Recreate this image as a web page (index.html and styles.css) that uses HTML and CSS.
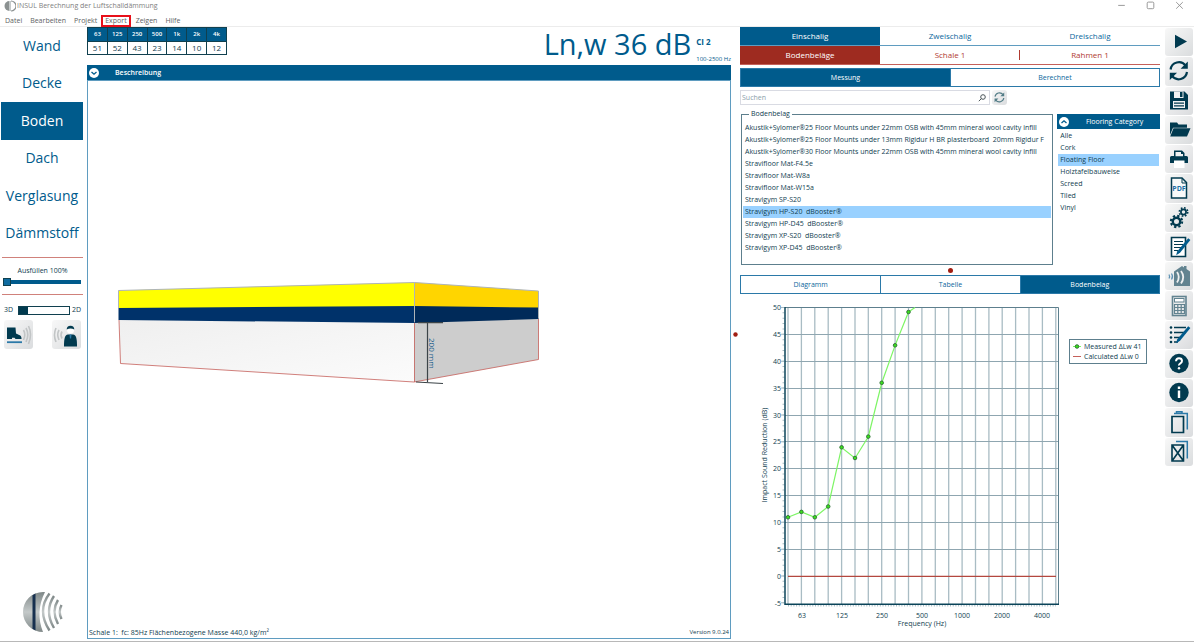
FILE: index.html
```html
<!DOCTYPE html>
<html lang="de">
<head>
<meta charset="utf-8">
<title>INSUL Berechnung der Luftschalldämmung</title>
<link rel="stylesheet" href="styles.css">
</head>
<body>
<svg class="defs" aria-hidden="true">
  <defs>
    <linearGradient id="ball" x1="0" y1="0" x2="0" y2="1"><stop offset="0" stop-color="#7f8888"/><stop offset=".5" stop-color="#c4c9c9"/><stop offset="1" stop-color="#7f8888"/></linearGradient>
    <linearGradient id="front" x1="0" y1="0" x2="1" y2="1"><stop offset="0" stop-color="#efefef"/><stop offset="1" stop-color="#fbfbfb"/></linearGradient>
    <symbol id="refresh" viewBox="0 0 28 28">
      <g fill="none" stroke="currentColor" stroke-width="2.2"><path d="M5.600 12.500A8.400 8.400 0 0 1 20.600 8.600"/><path d="M22 15A8.400 8.400 0 0 1 7 18.900"/></g>
      <path fill="currentColor" d="M22.800 4.600v7.200h-7.200zM4.800 22.900v-7.200H12z"/>
    </symbol>
    <symbol id="pen" viewBox="0 0 28 28"><path fill="#005b8c" d="M23.200 5.200l2.200 1.700L15 19.800l-3.800 2.400.9-3.800z"/></symbol>
  </defs>
</svg>
<header class="titlebar">
  <svg class="app-icon" viewBox="0 0 12 12"><path d="M5.500 1a5 5 0 0 0 0 10z" fill="#8b9191"/><path d="M5.500 1h1.500v10H5.500z" fill="#c4c9c9"/><path d="M7 1a5 5 0 0 1 0 10" fill="none" stroke="#8b9191" stroke-width="1.200"/></svg>
  <h1>INSUL Berechnung der Luftschalldämmung</h1>
  <div class="window-controls">
    <button aria-label="Minimieren"><svg viewBox="0 0 10 10"><path d="M2 4h6"/></svg></button>
    <button aria-label="Maximieren"><svg viewBox="0 0 10 10"><rect x="2" y="1" width="6" height="6" rx="1"/></svg></button>
    <button aria-label="Schließen"><svg viewBox="0 0 10 10"><path d="M2 1l6 6M8 1L2 7"/></svg></button>
  </div>
</header>
<nav class="menubar">
  <button>Datei</button><button>Bearbeiten</button><button>Projekt</button><button class="marked">Export</button><button>Zeigen</button><button>Hilfe</button>
</nav>
<main class="workspace">
  <aside class="sidebar">
    <div class="elements">
      <button>Wand</button><button>Decke</button><button class="active">Boden</button><button>Dach</button><button>Verglasung</button><button>Dämmstoff</button>
    </div>
    <div class="fill">
      <label for="fill">Ausfüllen 100%</label>
      <input id="fill" type="range" min="0" max="100" value="0">
    </div>
    <div class="dimension">
      <label for="dim">3D</label>
      <input id="dim" type="range" min="0" max="1" value="0">
      <span>2D</span>
    </div>
    <div class="modes">
      <button aria-label="Trittschall"><svg viewBox="0 0 28 28">
        <path fill="#013a4f" d="M3 6.500h8.500l.5 6c3 1.600 5.500 1.600 5.500 4.800v.7h-6l-1-1.200H8V18H3z"/><path stroke="#2b79a8" stroke-width="1.800" d="M3 21.200h15"/>
        <g fill="none" stroke="#c2c5c6" stroke-width="1.600"><path d="M19.500 9q2.500 4.500 0 10"/><path d="M22 7q3.500 6.500 0 14"/><path d="M24.500 5q4 8 0 18"/></g></svg></button>
      <button aria-label="Luftschall"><svg viewBox="0 0 28 28">
        <path fill="#013a4f" d="M12 25.500c0-7 .5-12 4-12h5c3.500 0 4 5 4 12z"/><circle cx="18.500" cy="9" r="3.600" fill="#fff"/><path fill="#013a4f" d="M14.700 8.500a3.800 3.800 0 0 1 7.600 0q-3.800-2-7.600 0z"/><path fill="#2b79a8" d="M17.500 13.500h2l-.4 4h-1.200z"/>
        <g fill="none" stroke="#c2c5c6" stroke-width="1.600"><path d="M4 7q-3 6.500 0 14"/><path d="M7 9q-2.500 4.500 0 10"/><path d="M10 10.500q-2 3.500 0 7"/></g></svg></button>
    </div>
    <svg class="logo" viewBox="0 0 40 40">
      <path d="M20 0a20 20 0 0 0 0 40q-8-20 2-40z" fill="url(#ball)"/><path d="M9.500 3.200l3-1.600v36.800l-3-1.600z" fill="#17304f"/>
      <g fill="none" stroke="url(#ball)" stroke-width="2.400"><path d="M26.500 1.500q-13 17 0 37"/><path d="M31 4q-10 15 0 32"/><path d="M35 8q-7 11 0 24"/><path d="M38.500 13q-3.500 7 0 14"/></g>
    </svg>
  </aside>

  <section class="model">
    <div class="summary">
      <table class="bands">
        <thead><tr><th>63</th><th>125</th><th>250</th><th>500</th><th>1k</th><th>2k</th><th>4k</th></tr></thead>
        <tbody><tr><td>51</td><td>52</td><td>43</td><td>23</td><td>14</td><td>10</td><td>12</td></tr></tbody>
      </table>
      <div class="rating"><strong>Ln,w 36 dB</strong><div class="spectrum"><b>CI 2</b><span>100-2500 Hz</span></div></div>
    </div>
    <div class="description-bar">
      <button class="round" aria-label="Beschreibung öffnen"><svg viewBox="0 0 10 10"><path d="M2.500 4L5 6.200 7.500 4"/></svg></button>
      <h2>Beschreibung</h2>
    </div>
    <div class="canvas">
      <svg class="scene" viewBox="88 81 642 546" role="img" aria-label="Bodenaufbau">
        <path fill="url(#front)" d="M119 319.500L414 322.500V382L120.500 363.500z"/>
        <path fill="#cdcdcd" d="M414 322.500L538.500 318V359.500L414 382z"/>
        <path fill="#00326a" d="M118.500 307L414.500 305V323L118.500 320z"/>
        <path fill="#002a59" d="M414.500 305L538.500 306V319L414.500 323z"/>
        <path fill="#ff0" d="M118.500 290.500L414.500 282.500V306L118.500 308z"/>
        <path fill="#ffd500" d="M414.500 282.500L538.500 291V307.500L414.500 306z"/>
        <path fill="none" stroke="#aeb4b8" d="M118.500 308V290.500L414.500 282.500 538.500 291V318M414.500 282.500V322"/>
        <path fill="none" stroke="#c5605a" stroke-width=".8" d="M119 320L120.500 363.500 414 382 538.500 359.500V319M414.500 323V382"/>
        <path fill="none" stroke="#3c4448" stroke-width="1.200" d="M418 322.700H443M427.500 323V382M416 382L443 383.500"/>
        <text class="measure" transform="translate(429 338) rotate(90)">200 mm</text>
      </svg>
      <footer><span>Schale 1:&nbsp; fc: 85Hz Flächenbezogene Masse 440,0 kg/m²</span><small>Version 9.0.24</small></footer>
    </div>
  </section>

  <section class="panel">
    <div class="tabs leaves"><button class="active">Einschalig</button><button>Zweischalig</button><button>Dreischalig</button></div>
    <div class="tabs parts"><button class="active">Bodenbeläge</button><button class="split">Schale 1</button><button>Rahmen 1</button></div>
    <div class="tabs boxed source"><button class="active">Messung</button><button>Berechnet</button></div>
    <div class="search">
      <div class="search-box"><input type="text" placeholder="Suchen" aria-label="Suchen"><svg viewBox="0 0 10 10"><circle cx="6" cy="4" r="2.300"/><path d="M4.300 5.700L1.800 8.200"/></svg></div>
      <button class="reload" aria-label="Aktualisieren"><svg><use href="#refresh"/></svg></button>
    </div>
    <div class="lists">
      <fieldset class="coverings">
        <legend>Bodenbelag</legend>
        <ul>
          <li>Akustik+Sylomer®25 Floor Mounts under 22mm OSB with 45mm mineral wool cavity infill</li>
          <li>Akustik+Sylomer®25 Floor Mounts under 13mm Rigidur H BR plasterboard&nbsp; 20mm Rigidur F</li>
          <li>Akustik+Sylomer®30 Floor Mounts under 22mm OSB with 45mm mineral wool cavity infill</li>
          <li>Stravifloor Mat-F4.5e</li>
          <li>Stravifloor Mat-W8a</li>
          <li>Stravifloor Mat-W15a</li>
          <li>Stravigym SP-S20</li>
          <li class="selected">Stravigym HP-S20&nbsp; dBooster®</li>
          <li>Stravigym HP-D45&nbsp; dBooster®</li>
          <li>Stravigym XP-S20&nbsp; dBooster®</li>
          <li>Stravigym XP-D45&nbsp; dBooster®</li>
        </ul>
      </fieldset>
      <div class="categories">
        <div class="category-head"><button class="round" aria-label="Einklappen"><svg viewBox="0 0 10 10"><path d="M2.500 6L5 3.800 7.500 6"/></svg></button><h2>Flooring Category</h2></div>
        <ul>
          <li>Alle</li><li>Cork</li><li class="selected">Floating Floor</li><li>Holztafelbauweise</li><li>Screed</li><li>Tiled</li><li>Vinyl</li>
        </ul>
      </div>
    </div>
    <div class="grip"></div>
    <div class="tabs boxed views"><button>Diagramm</button><button>Tabelle</button><button class="active">Bodenbelag</button></div>
    <svg class="chart" viewBox="740 294 420 343" preserveAspectRatio="xMidYMin meet" role="img" aria-label="Impact Sound Reduction">
      <circle cx="735.500" cy="334.500" r="2.200" fill="#a11e12"/>
      <path stroke="#a9bcc4" stroke-width="1.300" d="M788 307.500V604M801.400 307.500V604M814.800 307.500V604M828.200 307.500V604M841.600 307.500V604M855 307.500V604M868.300 307.500V604M881.700 307.500V604M895.100 307.500V604M908.500 307.500V604M921.900 307.500V604M935.300 307.500V604M948.700 307.500V604M962.100 307.500V604M975.500 307.500V604M988.900 307.500V604M1002.200 307.500V604M1015.600 307.500V604M1029 307.500V604M1042.400 307.500V604M1055.800 307.500V604"/>
      <path stroke="#8fa6b0" stroke-width="1" d="M785 334.500H1059M785 361.500H1059M785 388.500H1059M785 415.500H1059M785 441.500H1059M785 468.500H1059M785 495.500H1059M785 522.500H1059M785 549.500H1059"/>
      <path stroke="#a9bcc4" stroke-width="2" stroke-dasharray="1 4.370" d="M783.500 307V604"/>
      <path stroke="#a9bcc4" stroke-width="3" stroke-dasharray="1 25.850" d="M782.500 307V604"/>
      <path stroke="#a9bcc4" stroke-width="2" stroke-dasharray="1 1.700" d="M788 605.500H1056"/>
      <path fill="none" stroke="#5d7f8d" d="M785 307.500H1058.500V604"/>
      <path fill="none" stroke="#0b4459" stroke-width="1.500" d="M785 307V604.300H1059"/>
      <path stroke="#b4473f" stroke-width="1.200" d="M788 576.400H1056"/>
      <path fill="none" stroke="#7df565" stroke-width="1.200" d="M788 517.300L801.400 511.900 814.800 517.300 828.200 506.500 841.600 447.500 855 458.200 868.300 436.700 881.700 383 895.100 345.400 908.500 312 915 307.500"/>
      <g class="points"><circle cx="788" cy="517.300" r="1.800"/><circle cx="801.400" cy="511.900" r="1.800"/><circle cx="814.800" cy="517.300" r="1.800"/><circle cx="828.200" cy="506.500" r="1.800"/><circle cx="841.600" cy="447.300" r="1.800"/><circle cx="855" cy="458" r="1.800"/><circle cx="868.300" cy="436.600" r="1.800"/><circle cx="881.700" cy="382.800" r="1.800"/><circle cx="895.100" cy="345.300" r="1.800"/><circle cx="908.500" cy="312" r="1.800"/></g>
      <g class="scale-y"><text x="781" y="310">50</text><text x="781" y="337">45</text><text x="781" y="364">40</text><text x="781" y="391">35</text><text x="781" y="418">30</text><text x="781" y="444">25</text><text x="781" y="471">20</text><text x="781" y="498">15</text><text x="781" y="525">10</text><text x="781" y="552">5</text><text x="781" y="579">0</text><text x="781" y="606">-5</text></g>
      <g class="scale-x"><text x="802" y="618">63</text><text x="842" y="618">125</text><text x="882" y="618">250</text><text x="922" y="618">500</text><text x="962" y="618">1000</text><text x="1002" y="618">2000</text><text x="1042" y="618">4000</text><text x="922" y="626">Frequency (Hz)</text><text transform="translate(767 455) rotate(-90)">Impact Sound Reduction (dB)</text></g>
      <rect x="1069.500" y="339.500" width="77" height="24" fill="#fff" stroke="#5d7f8d"/>
      <path stroke="#7df565" d="M1073 346.500H1081"/><g class="points"><circle cx="1077" cy="346.500" r="1.800"/></g><path stroke="#c5605a" d="M1073 356.500H1081"/>
      <text x="1084" y="349">Measured ΔLw 41</text><text x="1084" y="359">Calculated ΔLw 0</text>
    </svg>
  </section>

  <aside class="toolbar">
    <button aria-label="Berechnen"><svg viewBox="0 0 28 28"><path fill="#013a4f" d="M10 6.700L22 13.500 10 20.200z"/></svg></button>
    <button aria-label="Aktualisieren"><svg viewBox="0 0 28 28"><use href="#refresh"/></svg></button>
    <button aria-label="Speichern"><svg viewBox="0 0 28 28"><path fill="#013a4f" d="M5 4.500h14.500L23 8v14.500H5z"/><path fill="#f1f2f3" d="M9 4.500h9.500v6.500H9zM8 14h12v7H8z"/><path fill="#013a4f" d="M15 5h2.500v5H15zM9 15.500h10v1.300H9zM9 18.200h10v1.300H9z"/></svg></button>
    <button aria-label="Öffnen"><svg viewBox="0 0 28 28"><path fill="#013a4f" d="M5 6.500h7l1.500 2H22v3.200H8L5 19z"/><path fill="#013a4f" d="M8.500 12.300H25.500L22 20.500H5.200z"/></svg></button>
    <button aria-label="Drucken"><svg viewBox="0 0 28 28"><path fill="#013a4f" d="M9 5.500h8l2.500 2.500v3.500H9zM6.500 11h15a1.500 1.500 0 0 1 1.500 1.500V18H5v-5.500A1.500 1.500 0 0 1 6.500 11z"/><path fill="#fff" d="M9 15.500h10.500V23H9z"/><path fill="#f1f2f3" d="M10.500 7h5.500v2h2v2.200h-7.500z"/></svg></button>
    <button aria-label="PDF"><svg viewBox="0 0 28 28"><path fill="#f8f9f9" stroke="#013a4f" stroke-width="1.500" d="M6.500 4h10.500l4.500 4.500v15.500H6.500z"/><path fill="none" stroke="#013a4f" d="M17 4.500V9h4.500"/><text class="pdf" x="14" y="17">PDF</text></svg></button>
    <button aria-label="Einstellungen"><svg viewBox="0 0 28 28" fill="none" stroke="#013a4f"><circle cx="11.500" cy="17.500" r="3.700" stroke-width="2.400"/><circle cx="11.500" cy="17.500" r="5.700" stroke-width="2" stroke-dasharray="2.300 2.180"/><circle cx="18.500" cy="8" r="2.600" stroke-width="1.700"/><circle cx="18.500" cy="8" r="4.200" stroke-width="1.600" stroke-dasharray="1.700 1.600"/></svg></button>
    <button aria-label="Bericht bearbeiten"><svg viewBox="0 0 28 28"><path fill="#fff" stroke="#013a4f" stroke-width="1.600" d="M6.500 4.500h14v19h-14z"/><path stroke="#013a4f" d="M9 8.500h9M9 11.500h9M9 14.500h7M9 17.500h4"/><use href="#pen"/></svg></button>
    <button aria-label="Gebäude"><svg viewBox="0 0 28 28"><path fill="#628390" d="M9 9.500L17 4l2 1.500V4h2.500v3L25 9.500V24H9z"/><g fill="none" stroke="#eef0f1" stroke-width="1.800"><path d="M12 10q3.500 5 0 10.500"/><path d="M16 9q4.500 6 0 12.500"/></g><g fill="none" stroke="#5d91b3" stroke-width="1.200"><path d="M6.500 11.500q2 3 0 6"/><path d="M4 12.500q1.200 2 0 4"/></g></svg></button>
    <button aria-label="Rechner"><svg viewBox="0 0 28 28" fill="none" stroke="#628390"><rect x="7.500" y="4.500" width="13.500" height="19" stroke-width="1.600"/><rect x="9.500" y="6.500" width="9.500" height="3.500" fill="#fff"/><path d="M9.500 12.500H19.500M9.500 15.500H19.500M9.500 18.500H19.500M9.500 21.500H19.500M9.500 12V22M12.800 12V22M16.200 12V22M19.500 12V22" stroke-width="1.200"/></svg></button>
    <button aria-label="Liste bearbeiten"><svg viewBox="0 0 28 28"><path stroke="#013a4f" stroke-width="1.600" d="M9 6.500h12M9 11.500h12M9 16.500h7M9 21h4"/><g fill="#013a4f"><circle cx="6" cy="6.500" r="1.300"/><circle cx="6" cy="11.500" r="1.300"/><circle cx="6" cy="16.500" r="1.300"/><circle cx="6" cy="21" r="1.300"/></g><use href="#pen"/></svg></button>
    <button aria-label="Hilfe"><svg viewBox="0 0 28 28"><circle cx="14" cy="13.500" r="9.700" fill="#013a4f"/><path fill="none" stroke="#fff" stroke-width="2" d="M11 11.300q.2-3 3-3t3 2.500q0 1.600-1.600 2.500T14 15.500"/><circle cx="14" cy="18.300" r="1.200" fill="#fff"/></svg></button>
    <button aria-label="Info"><svg viewBox="0 0 28 28"><circle cx="14" cy="13.500" r="9.700" fill="#013a4f"/><path fill="#fff" d="M12.800 11.500h2.400v7.500h-2.400zM12.800 7.500h2.400v2.400h-2.400z"/></svg></button>
    <button aria-label="Einfügen"><svg viewBox="0 0 28 28" fill="none"><path stroke="#2b79a8" stroke-width="1.500" d="M11.500 4.500V2.800h5.500v1.700M9 4.500h13.300V20.500"/><path stroke="#013a4f" stroke-width="1.700" d="M7 7.500h11.500v16H7z"/></svg></button>
    <button aria-label="Löschen"><svg viewBox="0 0 28 28" fill="none"><path stroke="#2b79a8" stroke-width="1.500" d="M11 3.500h11.300v17"/><path stroke="#013a4f" stroke-width="1.600" d="M7 7h11.500v16H7zM7 7l11.500 16M18.500 7L7 23"/></svg></button>
  </aside>
</main>
</body>
</html>
```
FILE: styles.css
```css
:root { --blue: #005b8c; --red: #9e2b20; --ink: #10404f; --line: #5d7f8d; --select: #99d1ff; }
* { box-sizing: border-box; }
body { margin: 0; min-height: 100vh; display: flex; flex-direction: column; background: #fff; border-bottom: 1px solid #b8b8b8; color: var(--ink); font: 7px/12px "Open Sans", "Noto Sans", sans-serif; }
button { font: inherit; color: inherit; background: none; border: 0; padding: 0; margin: 0; }
ul { list-style: none; margin: 0; padding: 0; }
h1, h2 { margin: 0; font-size: 7px; font-weight: 400; }
.defs { position: absolute; width: 0; height: 0; }

.titlebar { display: flex; align-items: center; gap: 1px; height: 12px; padding: 0 9px 0 4px; color: #808080; }
.titlebar h1 { flex: 1; }
.app-icon { width: 12px; height: 12px; }
.window-controls { display: flex; gap: 18px; }
.window-controls button { height: 12px; }
.window-controls svg { width: 11px; height: 11px; display: block; fill: none; stroke: #8c8c8c; stroke-width: .8; }

.menubar { display: flex; align-items: center; height: 15px; padding: 3px 0 0 5px; border-bottom: 1px solid #ececec; color: #5e6263; }
.menubar button { margin-right: 8px; line-height: 10px; }
.menubar .marked { border: 2px solid #e8101a; line-height: 8px; padding: 0 2px; margin: 0 5px 0 -4px; }

.workspace { flex: 1; display: grid; grid-template-columns: 84px minmax(0, 656fr) minmax(0, 425fr) 28px; padding-right: 1px; }
.sidebar { display: flex; flex-direction: column; padding-right: 1px; }
.elements { display: grid; grid-auto-rows: 1fr; height: 225px; padding-left: 1px; }
.elements button { font-size: 14px; color: var(--blue); }
.elements .active { background: var(--blue); color: #fff; }
.fill { display: flex; flex-direction: column; gap: 1px; margin: 5px 0 0 2px; padding: 7px 0; border: solid #d0817b; border-width: 1px 0; height: 38px; text-align: center; }
input[type="range"] { appearance: none; -webkit-appearance: none; margin: 0; background: none; }
.fill input { height: 8px; width: 78px; margin: 0 1px; background: linear-gradient(var(--blue), var(--blue)) center / 100% 4px no-repeat; }
.fill input::-webkit-slider-thumb { -webkit-appearance: none; width: 8px; height: 8px; background: #0f6ba0; border: 1px solid var(--ink); }
.dimension { display: flex; align-items: center; gap: 5px; padding: 9px 2px 0 4px; }
.dimension input { flex: 1; min-width: 0; width: 50px; height: 9px; border: 1px solid var(--ink); }
.dimension input::-webkit-slider-thumb { -webkit-appearance: none; width: 9px; height: 7px; background: #013a4f; }
.dimension span { margin-left: -3px; }
.modes { display: flex; justify-content: space-between; padding: 4px 2px 0 4px; }
.modes button, .toolbar button, .reload { border-radius: 3px; background: linear-gradient(135deg, #f8f8f8, #dadcde); }
.modes button { width: 29px; height: 29px; }
.modes svg, .toolbar svg { display: block; width: 28px; height: 28px; }
.logo { width: 40px; height: 40px; margin: auto 0 9px 23px; }

.model { display: flex; flex-direction: column; padding: 0 9px 2px 3px; }
.summary { display: flex; justify-content: space-between; height: 38px; color: var(--blue); }
.bands { align-self: flex-start; width: 140px; table-layout: fixed; border-collapse: collapse; text-align: center; line-height: 13px; color: var(--ink); }
.bands th, .bands td { padding: 0; border: 1px solid var(--ink); }
.bands th { background: var(--blue); color: #fff; font-size: 6px; font-weight: 600; }
.bands td { font-size: 8px; line-height: 12px; }
.rating { display: flex; gap: 5px; }
.rating strong { font-size: 29px; line-height: 34px; font-weight: 400; }
.spectrum { display: flex; flex-direction: column; padding-top: 9px; }
.spectrum b { font-size: 8px; }
.spectrum span { font-size: 6px; line-height: 8px; margin-top: 7px; }
.description-bar, .category-head { display: flex; align-items: center; background: var(--blue); color: #fff; height: 15px; }
.description-bar { gap: 16px; padding-left: 2px; }
.description-bar h2 { font-weight: 600; }
.round { width: 10px; height: 10px; border-radius: 50%; background: #fff; flex: none; }
.round svg { display: block; width: 10px; height: 10px; fill: none; stroke: var(--blue); stroke-width: 1.3; }
.canvas { flex: 1; display: flex; flex-direction: column; border: 1px solid #5f9cc0; }
.scene { flex: 1; width: 100%; min-height: 0; display: block; }
.measure { font-size: 8px; fill: #15598a; }
.canvas footer { display: flex; justify-content: space-between; line-height: 11px; padding: 0 1px; }
.canvas small { font-size: 6px; }

.panel { display: flex; flex-direction: column; margin-right: 5px; }
.tabs { display: grid; grid-template-columns: repeat(3, 1fr); height: 19px; font-size: 8px; color: #0b679c; flex: none; }
.tabs .active { background: var(--blue); color: #fff; }
.leaves { border-bottom: 1px solid #5f9cc0; }
.parts { color: #b03a30; border-bottom: 1px solid #c5605a; }
.parts .active { background: var(--red); color: #fff; }
.parts .split { background: linear-gradient(#b03a30, #b03a30) right / 1px 10px no-repeat; }
.boxed { border: 1px solid #2b79a8; font-size: 7px; }
.boxed button + button { border-left: 1px solid #2b79a8; }
.source { grid-template-columns: 1fr 1fr; margin-top: 3px; }
.search { display: flex; gap: 2px; margin-top: 3px; }
.search-box { display: flex; align-items: center; width: 250px; height: 15px; border: 1px solid #d9dbe3; }
.search-box input { flex: 1; min-width: 0; border: 0; padding: 0 0 0 1px; font: inherit; outline: 0; }
.search-box input::placeholder { color: #8ba0aa; opacity: 1; }
.search-box svg { width: 10px; height: 10px; margin-right: 2px; fill: none; stroke: #4a5559; }
.reload { width: 15px; height: 15px; color: #527c86; }
.reload svg { display: block; width: 15px; height: 15px; }
.lists { display: flex; gap: 4px; margin: 3px 0 0 1px; height: 157px; }
.coverings { flex: 312; min-width: 0; margin: 0; padding: 2px 1px 0; border: 1px solid var(--line); }
.coverings legend { margin-left: 6px; padding: 0 2px; line-height: 12px; }
.coverings li { white-space: pre; overflow: hidden; padding-left: 2px; }
.selected { background: var(--select); }
.categories { flex: 104; padding-top: 6px; }
.category-head { padding-left: 2px; }
.category-head h2 { flex: 1; text-align: center; }
.categories ul { padding: 1px 1px 0; }
.categories li { padding-left: 2px; }
.grip { width: 5px; height: 5px; border-radius: 50%; background: #a11e12; margin: 3px auto 2px; }
.chart { flex: 1; width: 100%; min-height: 0; overflow: visible; font-size: 7px; fill: var(--ink); }
.points circle { fill: #3be01c; stroke: #2c6b35; stroke-width: .9; }
.scale-y text { text-anchor: end; }
.scale-x text { text-anchor: middle; }

.toolbar { display: grid; grid-auto-rows: 1fr; gap: 1px; height: 439px; padding-top: 1px; color: #013a4f; }
.pdf { font-size: 7px; font-weight: 700; fill: #1d6fa5; text-anchor: middle; }
```
